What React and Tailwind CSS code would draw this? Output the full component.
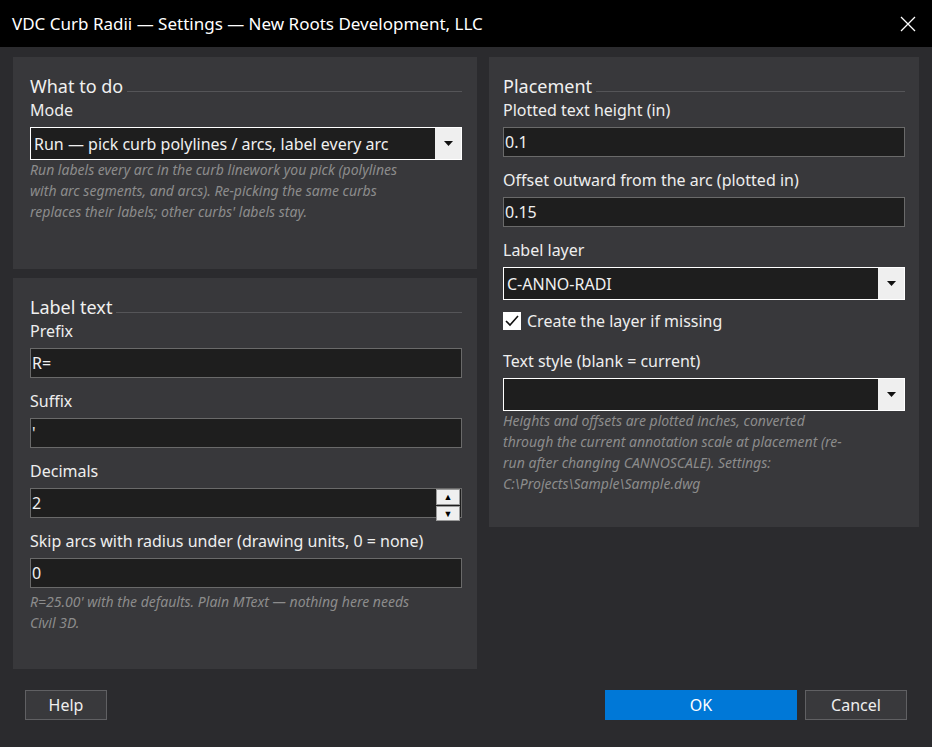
const F = { fontFamily: '"Noto Sans", "Open Sans", sans-serif' };

function Heading({ children }) {
  return (
    <div className="flex items-end h-[26px] gap-[4px]">
      <span className="text-[18px] leading-[22px] text-[#f0f0f0]">{children}</span>
      <div className="flex-1 h-px bg-[#555558] mb-[5px]" />
    </div>
  );
}
function Label({ children, mt = 'mt-[4px]' }) {
  return <div className={`text-[16px] leading-[22px] text-[#eeeeee] ${mt}`}>{children}</div>;
}
function Input({ value, spin }) {
  return (
    <div className="mt-[6px] h-[30px] bg-[#1e1e1e] border border-[#6a6a6a] flex items-center text-[16px] text-[#f0f0f0]">
      <span className="pl-[1px] flex-1">{value}</span>
      {spin && (
        <div className="w-[24px] h-[28px] flex flex-col gap-[1px] mr-[1px]">
          <div className="flex-1 bg-[#efefef] border border-[#9a9a9a] flex items-center justify-center text-[9px] text-black">▲</div>
          <div className="flex-1 bg-[#efefef] border border-[#9a9a9a] flex items-center justify-center text-[9px] text-black">▼</div>
        </div>
      )}
    </div>
  );
}
function Select({ value }) {
  return (
    <div className="mt-[6px] h-[33px] bg-[#1e1e1e] border border-white flex items-center text-[16px] text-[#f0f0f0]">
      <span className="pl-[3px] flex-1">{value}</span>
      <div className="w-[26px] h-full bg-[#efefef] flex items-center justify-center">
        <svg width="9" height="5" viewBox="0 0 9 5"><path d="M0 0h9L4.5 5z" fill="#111" /></svg>
      </div>
    </div>
  );
}
function Hint({ children }) {
  return <div className="italic text-[14px] leading-[21px] text-[#8c8c8c] pr-[50px]">{children}</div>;
}

export default function App() {
  return (
    <div style={F} className="w-[932px] h-[747px] bg-[#2b2b2e] flex flex-col overflow-hidden">
      <div className="h-[47px] bg-black flex items-center justify-between pl-[12px] pr-[16px] shrink-0">
        <span className="text-[17px] text-white">VDC Curb Radii — Settings — New Roots Development, LLC</span>
        <svg width="16" height="16" viewBox="0 0 16 16"><path d="M1 1L15 15M15 1L1 15" stroke="white" strokeWidth="1.3" /></svg>
      </div>
      <div className="flex gap-[12px] px-[13px] pt-[10px]">
        <div className="w-[464px] flex flex-col gap-[9px]">
          <div className="bg-[#38383b] h-[212px] px-[17px] pt-[14px] pr-[15px]">
            <Heading>What to do</Heading>
            <Label mt="mt-[2px]">Mode</Label>
            <Select value="Run — pick curb polylines / arcs, label every arc" />
            <div className="mt-[-1px]"><Hint>Run labels every arc in the curb linework you pick (polylines with arc segments, and arcs). Re-picking the same curbs replaces their labels; other curbs' labels stay.</Hint></div>
          </div>
          <div className="bg-[#38383b] h-[391px] px-[17px] pt-[14px] pr-[15px]">
            <Heading>Label text</Heading>
            <Label mt="mt-[2px]">Prefix</Label>
            <Input value="R=" />
            <Label mt="mt-[12px]">Suffix</Label>
            <Input value="'" />
            <Label mt="mt-[12px]">Decimals</Label>
            <Input value="2" spin />
            <Label mt="mt-[12px]">Skip arcs with radius under (drawing units, 0 = none)</Label>
            <Input value="0" />
            <div className="mt-[3px]"><Hint>R=25.00' with the defaults. Plain MText — nothing here needs Civil 3D.</Hint></div>
          </div>
        </div>
        <div className="w-[430px] bg-[#38383b] h-[470px] px-[14px] pt-[14px] pr-[14px]">
          <Heading>Placement</Heading>
          <Label mt="mt-[2px]">Plotted text height (in)</Label>
          <Input value="0.1" />
          <Label mt="mt-[12px]">Offset outward from the arc (plotted in)</Label>
          <Input value="0.15" />
          <Label mt="mt-[12px]">Label layer</Label>
          <Select value="C-ANNO-RADI" />
          <div className="mt-[10px] flex items-center gap-[6px] h-[22px]">
            <div className="w-[18px] h-[18px] bg-white flex items-center justify-center">
              <svg width="14" height="12" viewBox="0 0 14 12"><path d="M1 6l4 4L13 1" stroke="#111" strokeWidth="1.6" fill="none" /></svg>
            </div>
            <span className="text-[16px] text-[#eeeeee]">Create the layer if missing</span>
          </div>
          <Label mt="mt-[18px]">Text style (blank = current)</Label>
          <Select value="" />
          <div className="mt-[-1px]"><Hint>Heights and offsets are plotted inches, converted through the current annotation scale at placement (re-run after changing CANNOSCALE). Settings: C:\Projects\Sample\Sample.dwg</Hint></div>
        </div>
      </div>
      <div className="flex items-center mt-[21px] px-[25px] h-[30px]">
        <div className="w-[82px] h-[30px] bg-[#39393c] border border-[#606063] flex items-center justify-center text-[16px] text-[#eee]">Help</div>
        <div className="flex-1" />
        <div className="w-[192px] h-[30px] bg-[#0078d7] flex items-center justify-center text-[16px] text-white">OK</div>
        <div className="w-[102px] h-[30px] ml-[8px] bg-[#39393c] border border-[#606063] flex items-center justify-center text-[16px] text-[#eee]">Cancel</div>
        <div className="w-[0px]" />
      </div>
    </div>
  );
}
